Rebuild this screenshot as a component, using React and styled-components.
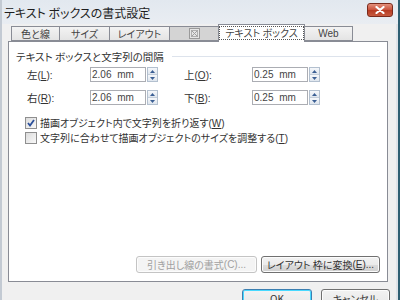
import React from "react"
import styled, { createGlobalStyle } from "styled-components"

const GlobalStyle = createGlobalStyle`
  html, body {
    margin: 0;
    padding: 0;
    background: #f0f0f0;
  }
  body {
    font-family: "Noto Sans CJK JP", "Noto Sans", sans-serif;
    font-size: 10px;
    color: #333;
    white-space: nowrap;
  }
`

const uiFont = `"Noto Sans CJK JP", "Noto Sans", sans-serif`
const latinFont = `"Liberation Sans", "Noto Sans CJK JP", sans-serif`

const Window = styled.div`
  width: 400px;
  height: 300px;
  box-sizing: border-box;
  display: flex;
  flex-direction: column;
  background: #f0f0f0;
  border-left: 2px solid #c3cad3;
  border-right: 2px solid #2f5f72;
  box-shadow: inset -2px 0 0 #dfe3e8;
  overflow: hidden;
`

const TitleBar = styled.div`
  height: 24px;
  flex: none;
  display: flex;
  align-items: center;
  justify-content: space-between;
  padding: 0 5px 0 2px;
  background: linear-gradient(#e2e8ef, #e9edf2);
`

const Title = styled.div`
  font-family: ${uiFont};
  font-size: 12px;
  font-feature-settings: "palt";
  color: #1e1e1e;
  margin-top: 1px;
`

const CloseButton = styled.div`
  width: 26px;
  height: 14px;
  margin-top: -5px;
  box-sizing: border-box;
  border: 1px solid #7a2a1c;
  border-radius: 3px;
  background: linear-gradient(#e3907c, #c9503a 50%, #b63a22 51%, #c75a3e);
  display: flex;
  align-items: center;
  justify-content: center;
`

const Body = styled.div`
  flex: 1;
  display: flex;
  flex-direction: column;
  padding: 0 10px 0 6px;
`

const TabRow = styled.div`
  height: 17px;
  display: flex;
  align-items: flex-end;
  padding-left: 3px;
  position: relative;
  z-index: 1;
`

const Tab = styled.div`
  box-sizing: border-box;
  width: ${({ w }) => w}px;
  height: ${({ active }) => (active ? 18 : 15)}px;
  margin-bottom: ${({ active }) => (active ? -1 : 0)}px;
  margin-left: -1px;
  border: 1px solid #898c95;
  border-bottom: ${({ active }) => (active ? "none" : "1px solid #898c95")};
  background: ${({ active, disabled }) =>
    active ? "#fff" : disabled ? "#d4d4d4" : "linear-gradient(#f3f3f3, #e4e4e4)"};
  display: flex;
  align-items: center;
  justify-content: center;
  font-family: ${({ latin }) => (latin ? latinFont : uiFont)};
  font-size: 10px;
  font-feature-settings: "palt";
  color: #444;
  &:first-child {
    margin-left: 0;
  }
`

const FocusText = styled.span`
  border: 1px dotted #555;
  padding: 0 5px;
  line-height: 12px;
  margin-bottom: 1px;
`

const Panel = styled.div`
  height: 241px;
  box-sizing: border-box;
  background: #fff;
  border: 1px solid #898c95;
  display: flex;
  flex-direction: column;
  padding: 7px 7px 8px 7px;
`

const GroupHeading = styled.div`
  display: flex;
  align-items: center;
  gap: 8px;
  font-feature-settings: "palt";
  height: 14px;
  font-size: 10.5px;
  &::after {
    content: "";
    flex: 1;
    height: 1px;
    background: #dde3ec;
  }
`

const FieldRow = styled.div`
  display: flex;
  align-items: center;
  height: 15px;
  padding-left: 11px;
  margin-top: ${({ first }) => (first ? 4 : 8)}px;
`

const FieldLabel = styled.div`
  width: ${({ w }) => w}px;
  margin-left: ${({ offset }) => offset || 0}px;
  font-feature-settings: "palt";
  font-size: 10.5px;
`

const Key = styled.span`
  font-family: ${latinFont};
  font-size: 10px;
  u {
    text-decoration-skip-ink: none;
  }
`

const Spin = styled.div`
  width: 68px;
  height: 15px;
  display: flex;
`

const SpinInput = styled.div`
  flex: 1;
  box-sizing: border-box;
  border: 1px solid #abadb3;
  background: #fff;
  font-family: ${latinFont};
  font-size: 10px;
  line-height: 13px;
  padding-left: 1px;
  color: #444;
  word-spacing: 3px;
`

const SpinButtons = styled.div`
  width: 11px;
  margin-left: 1px;
  display: flex;
  flex-direction: column;
  box-sizing: border-box;
  border: 1px solid #b3c0cf;
`

const SpinHalf = styled.div`
  flex: 1;
  display: flex;
  align-items: center;
  justify-content: center;
  background: linear-gradient(#f6f8fb, #dfe6ee);
  & + & {
    border-top: 1px solid #c4ceda;
  }
`

const CheckRow = styled.div`
  display: flex;
  align-items: center;
  gap: 3px;
  height: 15px;
  padding-left: 9px;
  margin-top: ${({ first }) => (first ? 10 : 0)}px;
  font-feature-settings: "palt";
`

const Box = styled.div`
  width: 12px;
  height: 12px;
  box-sizing: border-box;
  border: 1px solid #8f8f8f;
  background: linear-gradient(135deg, #dcdcdc, #f8f8f8);
  display: flex;
  align-items: center;
  justify-content: center;
`

const Spacer = styled.div`
  flex: 1;
`

const ActionRow = styled.div`
  display: flex;
  justify-content: flex-end;
  gap: 4px;
`

const Button = styled.div`
  width: ${({ w }) => w}px;
  height: ${({ h }) => h || 17}px;
  box-sizing: border-box;
  border: 1px solid ${({ disabled, primary }) => (disabled ? "#c4c4c4" : primary ? "#3c7fb1" : "#707070")};
  border-radius: 3px;
  background: ${({ disabled }) =>
    disabled ? "#f4f4f4" : "linear-gradient(#f2f2f2 0%, #ebebeb 50%, #dddddd 51%, #cfcfcf 100%)"};
  box-shadow: ${({ primary }) => (primary ? "inset 0 0 0 1px #48d9ff" : "inset 0 0 0 1px #fcfcfc")};
  color: ${({ disabled }) => (disabled ? "#a0a0a0" : "#333")};
  display: flex;
  align-items: ${({ h }) => (h ? "flex-start" : "center")};
  padding-top: ${({ h }) => (h ? 4 : 0)}px;
  justify-content: center;
  font-feature-settings: "palt";
  font-size: 10px;
  line-height: 1;
  white-space: nowrap;
`

const Footer = styled.div`
  display: flex;
  justify-content: flex-end;
  gap: 9px;
  padding-top: 7px;
  margin-right: -2px;
`

function Arrow({ up }) {
  return (
    <svg width="5" height="3" viewBox="0 0 5 3">
      <path d={up ? "M0 3 L2.5 0 L5 3 Z" : "M0 0 L5 0 L2.5 3 Z"} fill="#3b5f94" />
    </svg>
  )
}

function SpinField({ value }) {
  return (
    <Spin>
      <SpinInput>{value}</SpinInput>
      <SpinButtons>
        <SpinHalf><Arrow up /></SpinHalf>
        <SpinHalf><Arrow /></SpinHalf>
      </SpinButtons>
    </Spin>
  )
}

function Access({ k, colon }) {
  return <Key>(<u>{k}</u>){colon ? ":" : ""}</Key>
}

function TabIcon() {
  return (
    <svg width="11" height="11" viewBox="0 0 11 11">
      <rect x="0.5" y="0.5" width="10" height="10" fill="#e6e6e6" stroke="#9a9a9a" />
      <rect x="2.5" y="2.5" width="6" height="6" fill="none" stroke="#b0b0b0" />
      <path d="M2.5 2.5 L8.5 8.5 M8.5 2.5 L2.5 8.5" stroke="#a0a0a0" />
    </svg>
  )
}

export default function App() {
  return (
    <>
      <GlobalStyle />
      <Window>
        <TitleBar>
          <Title>テキスト ボックスの書式設定</Title>
          <CloseButton>
            <svg width="10" height="8" viewBox="0 0 10 8">
              <path d="M1.5 1 L8.5 7 M8.5 1 L1.5 7" stroke="#fff" strokeWidth="2.2" strokeLinecap="round" />
            </svg>
          </CloseButton>
        </TitleBar>
        <Body>
          <TabRow>
            <Tab w={49}>色と線</Tab>
            <Tab w={51}>サイズ</Tab>
            <Tab w={61}>レイアウト</Tab>
            <Tab w={50} disabled><TabIcon /></Tab>
            <Tab w={87} active><FocusText>テキスト ボックス</FocusText></Tab>
            <Tab w={49} latin>Web</Tab>
          </TabRow>
          <Panel>
            <GroupHeading>テキスト ボックスと文字列の間隔</GroupHeading>
            <FieldRow first>
              <FieldLabel w={63}>左<Access k="L" colon /></FieldLabel>
              <SpinField value="2.06 mm" />
              <FieldLabel w={68} offset={26}>上<Access k="O" colon /></FieldLabel>
              <SpinField value="0.25 mm" />
            </FieldRow>
            <FieldRow>
              <FieldLabel w={63}>右<Access k="R" colon /></FieldLabel>
              <SpinField value="2.06 mm" />
              <FieldLabel w={68} offset={26}>下<Access k="B" colon /></FieldLabel>
              <SpinField value="0.25 mm" />
            </FieldRow>
            <CheckRow first>
              <Box>
                <svg width="8" height="8" viewBox="0 0 8 8">
                  <path d="M1 4 L3 6.5 L7 1" fill="none" stroke="#2a4f9a" strokeWidth="1.8" />
                </svg>
              </Box>
              <span>描画オブジェクト内で文字列を折り返す<Access k="W" /></span>
            </CheckRow>
            <CheckRow>
              <Box />
              <span>文字列に合わせて描画オブジェクトのサイズを調整する<Access k="T" /></span>
            </CheckRow>
            <Spacer />
            <ActionRow>
              <Button w={121} disabled>引き出し線の書式<Key>(C)...</Key></Button>
              <Button w={119}>レイアウト 枠に変換<Access k="E" /><Key>...</Key></Button>
            </ActionRow>
          </Panel>
          <Footer>
            <Button w={70} h={23} primary>OK</Button>
            <Button w={69} h={23}>キャンセル</Button>
          </Footer>
        </Body>
      </Window>
    </>
  )
}
